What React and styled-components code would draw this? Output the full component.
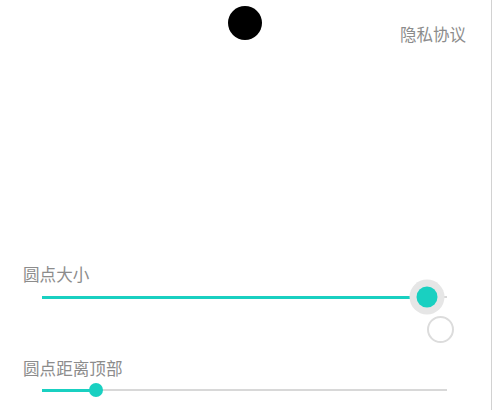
import React from 'react'
import styled, { createGlobalStyle } from 'styled-components'

const GlobalStyle = createGlobalStyle`
    html, body {
        margin: 0;
        padding: 0;
        background: #fff;
    }
    body {
        font-family: "Noto Sans CJK SC", "Noto Sans", sans-serif;
    }
`

const ACCENT = '#19d0c1'

const Screen = styled.div`
    width: 491px;
    height: 410px;
    border-right: 1px solid #d2d2d2;
    display: flex;
    flex-direction: column;
    overflow: hidden;
`

const Header = styled.div`
    height: 48px;
    padding-top: 6px;
    box-sizing: border-box;
    display: grid;
    grid-template-columns: 1fr auto 1fr;
    align-items: end;
`

const Dot = styled.div`
    grid-column: 2;
    align-self: start;
    width: 34px;
    height: 34px;
    border-radius: 50%;
    background: #000;
    margin-left: -1px;
`

const Link = styled.div`
    grid-column: 3;
    justify-self: end;
    margin-right: 25px;
    margin-bottom: 4px;
    font-size: 16.5px;
    line-height: 20px;
    color: #8c8c8c;
`

const Label = styled.div`
    margin-top: ${p => p.$top}px;
    padding-left: 23px;
    font-size: 16.6px;
    line-height: 20px;
    color: #8c8c8c;
`

const SliderRow = styled.div`
    height: ${p => p.$height}px;
    margin-top: ${p => p.$top || 0}px;
    padding-left: 42px;
    display: flex;
    align-items: center;
`

const Track = styled.div`
    position: relative;
    width: 405px;
    height: 2px;
    background: #d8d8d8;
`

const Fill = styled.div`
    position: absolute;
    left: 0;
    top: -0.5px;
    height: 3px;
    background: ${ACCENT};
`

const Thumb = styled.div`
    position: absolute;
    top: 50%;
    width: ${p => p.$size}px;
    height: ${p => p.$size}px;
    border-radius: 50%;
    background: ${ACCENT};
    transform: translate(-50%, -50%);
    box-shadow: ${p => (p.$focused ? '0 0 0 7px #e6e6e6' : 'none')};
`

const CircleRow = styled.div`
    margin-top: 8px;
    padding-right: 37px;
    display: flex;
    justify-content: flex-end;
`

const HollowCircle = styled.div`
    width: 27px;
    height: 27px;
    box-sizing: border-box;
    border-radius: 50%;
    border: 2px solid #dcdcdc;
`

function Slider({ value, thumb, focused, height, top }) {
    const pos = `${value * 100}%`
    return (
        <SliderRow $height={height} $top={top}>
            <Track>
                <Fill style={{ width: pos }} />
                <Thumb $size={thumb} $focused={focused} style={{ left: pos }} />
            </Track>
        </SliderRow>
    )
}

export default function App() {
    return (
        <Screen>
            <GlobalStyle />
            <Header>
                <Dot />
                <Link>隐私协议</Link>
            </Header>
            <Label $top={216}>圆点大小</Label>
            <Slider value={0.95} thumb={21} focused height={22} top={2} />
            <CircleRow>
                <HollowCircle />
            </CircleRow>
            <Label $top={15}>圆点距离顶部</Label>
            <Slider value={0.133} thumb={14} height={14} top={5} />
        </Screen>
    )
}
